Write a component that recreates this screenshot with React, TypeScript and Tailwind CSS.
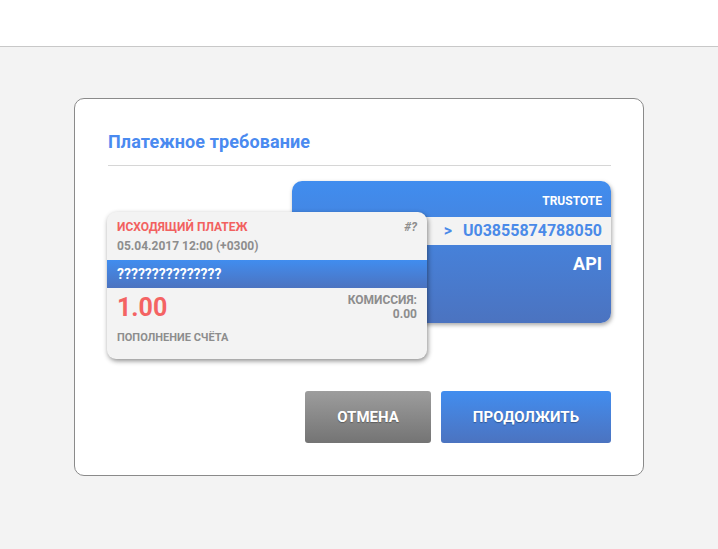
import React from "react";

export default function App() {
  return (
    <div className="w-[718px] h-[549px] bg-[#f3f3f3] flex flex-col" style={{ fontFamily: 'Roboto, "Noto Sans", sans-serif' }}>
      <div className="h-[47px] bg-white border-b border-[#c8c8c8] shrink-0" />
      <div className="pt-[51px] pl-[74px]">
        <div className="w-[570px] h-[378px] bg-white border border-[#8a8a8a] rounded-[10px] pl-[33px] pr-[32px] pt-[30px] flex flex-col">
          <div className="text-[18px] font-bold text-[#4a8af0] leading-[26px] h-[26px] tracking-[0.1px]">Платежное требование</div>
          <div className="mt-[10px] border-t border-[#d6d6d6]" />
          <div className="relative h-[193px]">
            <div className="ml-[184px] mt-[15px] w-[319px] h-[142px] rounded-[10px] bg-gradient-to-b from-[#408def] to-[#4b73c0] shadow-[1px_2px_4px_rgba(0,0,0,0.35)] flex flex-col pt-[12px]">
              <div className="text-right pr-[9px] text-white font-bold text-[12px] leading-[16px]">TRUSTOTE</div>
              <div className="mt-[8px] h-[28px] bg-[#f3f3f3] flex items-center justify-end pr-[9px] text-[#4a8ae8] font-bold text-[16px]">
                <span className="mr-[11px]">&gt;</span>
                <span>U03855874788050</span>
              </div>
              <div className="mt-[7px] text-right pr-[9px] text-white font-bold text-[18px] leading-[24px]">API</div>
            </div>
            <div className="absolute left-[-1px] top-[46px] w-[320px] h-[147px] rounded-[9px] bg-[#f3f3f3] shadow-[1px_2px_5px_rgba(0,0,0,0.45)] flex flex-col pt-[7px] overflow-hidden">
              <div className="flex justify-between px-[10px] items-center">
                <span className="text-[#f2615f] font-bold text-[12px] leading-[16px]">ИСХОДЯЩИЙ ПЛАТЕЖ</span>
                <span className="text-[#8d8d8d] font-bold text-[12px] leading-[16px] italic">#?</span>
              </div>
              <div className="px-[10px] mt-[3px] text-[#8d8d8d] font-bold text-[12px] leading-[16px]">05.04.2017 12:00 (+0300)</div>
              <div className="mt-[6px] h-[28px] bg-gradient-to-b from-[#408def] to-[#4b73c0] flex items-center px-[10px] text-white font-bold text-[14px]">???????????????</div>
              <div className="flex justify-between px-[10px] mt-[3px]">
                <span className="text-[#f46363] font-bold text-[25px] leading-[34px]">1.00</span>
                <div className="flex flex-col items-end text-[#8d8d8d] font-bold text-[12px] leading-[14px] pt-[2px]">
                  <span>КОМИССИЯ:</span>
                  <span>0.00</span>
                </div>
              </div>
              <div className="px-[10px] mt-[6px] text-[#8d8d8d] font-bold text-[11px] leading-[14px]">ПОПОЛНЕНИЕ СЧЁТА</div>
            </div>
          </div>
          <div className="mt-[32px] flex justify-end gap-[10px]">
            <button className="w-[126px] h-[52px] rounded-[3px] bg-gradient-to-b from-[#9d9d9d] to-[#747474] text-white font-bold text-[15px] [text-shadow:0_1px_1px_rgba(0,0,0,0.3)]">ОТМЕНА</button>
            <button className="w-[170px] h-[52px] rounded-[3px] bg-gradient-to-b from-[#418def] to-[#4b73c0] text-white font-bold text-[15px] [text-shadow:0_1px_1px_rgba(0,0,0,0.3)]">ПРОДОЛЖИТЬ</button>
          </div>
        </div>
      </div>
    </div>
  );
}
